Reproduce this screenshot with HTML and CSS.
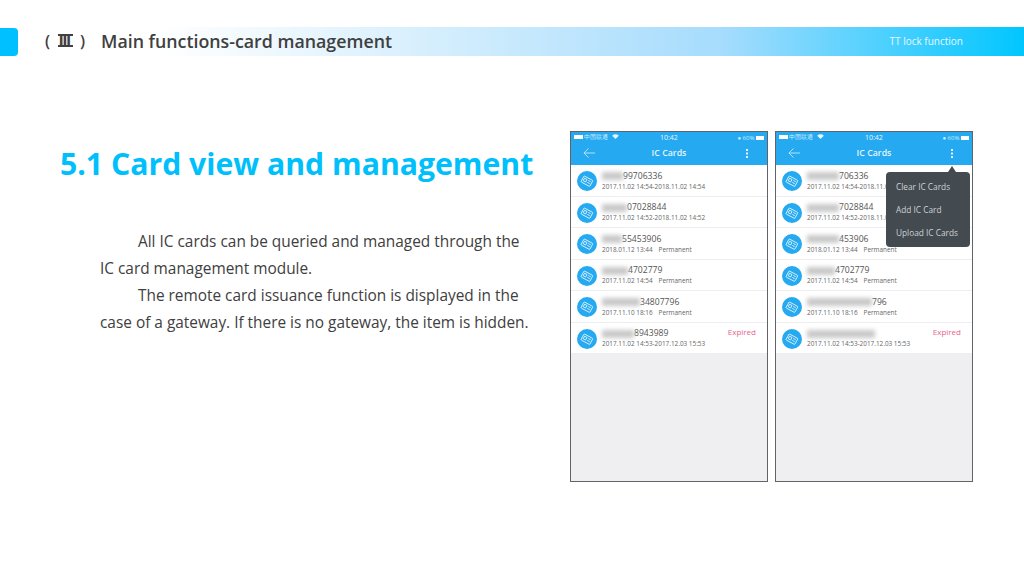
FILE: index.html
```html
<!DOCTYPE html>
<html lang="en">
<head>
  <meta charset="UTF-8" />
  <title>TT lock function</title>
  <link rel="stylesheet" href="styles.css">
</head>
<body>
  <svg class="defs" width="0" height="0">
    <symbol id="card" viewBox="0 0 22 22">
      <circle cx="11" cy="11" r="11" fill="#25a9f0"/>
      <g transform="rotate(28 11 11)" fill="none" stroke="#fff" stroke-width="0.8">
        <rect x="5.5" y="7.5" width="11" height="7.5" rx="0.8"/>
        <rect x="7.2" y="9.5" width="3" height="3.2"/>
        <path d="M12 9.8h3M12 12.2h3"/>
      </g>
    </symbol>
    <symbol id="wifi" viewBox="0 0 8 6">
      <path d="M0 2a5.6 5.6 0 0 1 8 0L4 6z" fill="#e4f5ff"/>
    </symbol>
  </svg>

  <header class="topbar">
    <div class="tab"></div>
    <div class="banner">
      <h1 class="section-name"><span class="num"><span>(</span><span class="roman">Ⅲ</span><span>)</span></span>Main functions-card management</h1>
      <span class="banner-note">TT lock function</span>
    </div>
  </header>

  <main class="content">
    <section class="copy">
      <h2>5.1 Card view and management</h2>
      <p>All IC cards can be queried and managed through the IC card management module.</p>
      <p>The remote card issuance function is displayed in the case of a gateway. If there is no gateway, the item is hidden.</p>
    </section>

    <div class="phones">
      <div class="phone">
        <div class="status">
          <span class="carrier"><i class="bars"></i>中国联通 <svg class="wifi"><use href="#wifi"/></svg></span>
          <span class="time">10:42</span>
          <span class="batt">● 60% <i class="cell"></i></span>
        </div>
        <div class="appbar">
          <svg class="back" viewBox="0 0 14 12"><path d="M13 6H1M6 1L1 6l5 5" fill="none" stroke="#bfe6fb" stroke-width="1"/></svg>
          <span>IC Cards</span>
          <i class="more"></i>
        </div>
        <ul class="cards">
          <li><svg class="ico"><use href="#card"/></svg><div><div class="no"><b class="blur" style="width:21px"></b>99706336</div><div class="meta">2017.11.02 14:54-2018.11.02 14:54</div></div></li>
          <li><svg class="ico"><use href="#card"/></svg><div><div class="no"><b class="blur" style="width:25px"></b>07028844</div><div class="meta">2017.11.02 14:52-2018.11.02 14:52</div></div></li>
          <li><svg class="ico"><use href="#card"/></svg><div><div class="no"><b class="blur" style="width:20px"></b>55453906</div><div class="meta">2018.01.12 13:44<em>Permanent</em></div></div></li>
          <li><svg class="ico"><use href="#card"/></svg><div><div class="no"><b class="blur" style="width:26px"></b>4702779</div><div class="meta">2017.11.02 14:54<em>Permanent</em></div></div></li>
          <li><svg class="ico"><use href="#card"/></svg><div><div class="no"><b class="blur" style="width:38px"></b>34807796</div><div class="meta">2017.11.10 18:16<em>Permanent</em></div></div></li>
          <li><svg class="ico"><use href="#card"/></svg><div><div class="no"><b class="blur" style="width:32px"></b>8943989</div><div class="meta">2017.11.02 14:53-2017.12.03 15:53</div></div><span class="expired">Expired</span></li>
        </ul>
      </div>

      <div class="phone">
        <div class="status">
          <span class="carrier"><i class="bars"></i>中国联通 <svg class="wifi"><use href="#wifi"/></svg></span>
          <span class="time">10:42</span>
          <span class="batt">● 60% <i class="cell"></i></span>
        </div>
        <div class="appbar">
          <svg class="back" viewBox="0 0 14 12"><path d="M13 6H1M6 1L1 6l5 5" fill="none" stroke="#bfe6fb" stroke-width="1"/></svg>
          <span>IC Cards</span>
          <i class="more"></i>
        </div>
        <ul class="cards">
          <li><svg class="ico"><use href="#card"/></svg><div><div class="no"><b class="blur" style="width:32px"></b>706336</div><div class="meta">2017.11.02 14:54-2018.11.0</div></div></li>
          <li><svg class="ico"><use href="#card"/></svg><div><div class="no"><b class="blur" style="width:32px"></b>7028844</div><div class="meta">2017.11.02 14:52-2018.11.0</div></div></li>
          <li><svg class="ico"><use href="#card"/></svg><div><div class="no"><b class="blur" style="width:32px"></b>453906</div><div class="meta">2018.01.12 13:44<em>Permanent</em></div></div></li>
          <li><svg class="ico"><use href="#card"/></svg><div><div class="no"><b class="blur" style="width:28px"></b>4702779</div><div class="meta">2017.11.02 14:54<em>Permanent</em></div></div></li>
          <li><svg class="ico"><use href="#card"/></svg><div><div class="no"><b class="blur" style="width:65px"></b>796</div><div class="meta">2017.11.10 18:16<em>Permanent</em></div></div></li>
          <li><svg class="ico"><use href="#card"/></svg><div><div class="no"><b class="blur" style="width:68px"></b></div><div class="meta">2017.11.02 14:53-2017.12.03 15:53</div></div><span class="expired">Expired</span></li>
        </ul>
        <div class="menu">
          <span>Clear IC Cards</span>
          <span>Add IC Card</span>
          <span>Upload IC Cards</span>
        </div>
      </div>
    </div>
  </main>
</body>
</html>
```

FILE: styles.css
```css
* {
  margin: 0;
  padding: 0;
  box-sizing: border-box;
}

body {
  width: 1024px;
  height: 576px;
  overflow: hidden;
  background: #fff;
  font-family: "Open Sans", sans-serif;
  color: #404040;
}

.defs {
  display: block;
}

.topbar {
  display: flex;
  margin-top: 27px;
  height: 29px;
}

.tab {
  width: 18px;
  height: 28px;
  margin-top: 1px;
  background: #00c0ff;
  border-radius: 0 4px 4px 0;
}

.banner {
  flex: 1;
  display: flex;
  align-items: center;
  justify-content: space-between;
  padding: 0 61px 2px 27px;
  background: linear-gradient(90deg, #fff 14%, #e4f4fd 32%, #a6dcfd 70%, #00c6fe 100%);
}

.section-name {
  display: flex;
  align-items: center;
  font-size: 17.8px;
  font-weight: 600;
  color: #404040;
  white-space: nowrap;
}

.num {
  display: flex;
  justify-content: space-between;
  align-items: center;
  width: 40px;
  margin-right: 16px;
  font-size: 16px;
}

.roman {
  display: block;
  width: 15px;
  height: 13px;
  border-top: 2px solid #404040;
  border-bottom: 2px solid #404040;
  font-family: "DejaVu Sans", sans-serif;
  font-size: 13px;
  font-weight: 700;
  line-height: 9px;
  letter-spacing: 0;
  text-align: center;
  overflow: hidden;
}

.banner-note {
  font-size: 10px;
  color: #e8f8ff;
}

.content {
  display: flex;
  height: 425px;
  padding: 75px 51px 0 60px;
  justify-content: space-between;
}

.copy {
  width: 474px;
}

.copy h2 {
  font-size: 30.2px;
  font-weight: 700;
  line-height: 40px;
  color: #00c0fb;
  white-space: nowrap;
  margin: 13px 0 44px;
}

.copy p {
  margin-left: 40px;
  width: 432px;
  font-size: 15.4px;
  line-height: 27px;
  text-indent: 38px;
}

.phones {
  display: flex;
  gap: 7px;
}

.phone {
  position: relative;
  width: 198px;
  height: 351px;
  background: #efeff1;
  border: 1px solid #5e6468;
}

.status {
  display: flex;
  justify-content: space-between;
  align-items: center;
  height: 11px;
  padding: 0 3px;
  background: #25a9f0;
  font-size: 6px;
  color: #cfeeff;
  position: relative;
}

.time {
  position: absolute;
  left: 89px;
  font-size: 7px;
  color: #e6f6ff;
}

.bars {
  display: inline-block;
  width: 9px;
  height: 4px;
  margin-right: 1px;
  background: #fff;
}

.wifi {
  width: 7px;
  height: 5px;
  margin-left: 2px;
}

.cell {
  display: inline-block;
  width: 8px;
  height: 4px;
  background: #fff;
}

.appbar {
  position: relative;
  display: flex;
  align-items: center;
  justify-content: center;
  height: 22px;
  padding-bottom: 3px;
  background: #25a9f0;
  color: #e4f5ff;
  font-size: 8.8px;
  font-weight: 600;
}

.back {
  position: absolute;
  left: 12px;
  top: 4px;
  width: 13px;
  height: 12px;
}

.more {
  position: absolute;
  right: 19px;
  top: 6px;
  width: 2px;
  height: 2px;
  background: #e4f5ff;
  box-shadow: 0 3.5px #e4f5ff, 0 7px #e4f5ff;
}

.cards {
  list-style: none;
  background: #fff;
}

.cards li {
  display: flex;
  align-items: center;
  height: 31.5px;
  padding: 0 11px 0 6px;
  border-bottom: 1px solid #eeeef0;
  gap: 5px;
}

.ico {
  flex: none;
  width: 20px;
  height: 20px;
  margin-top: 2px;
}

.no {
  display: flex;
  align-items: center;
  height: 13px;
  padding-top: 2px;
  font-size: 8.6px;
  line-height: 11px;
  color: #555;
}

.blur {
  display: block;
  height: 8px;
  background: #c9c9c9;
  filter: blur(2px);
}

.meta {
  font-size: 6.4px;
  line-height: 10px;
  color: #666;
  white-space: nowrap;
}

.meta em {
  font-style: normal;
  margin-left: 6px;
}

.expired {
  margin-left: auto;
  margin-bottom: 12px;
  font-size: 8px;
  color: #e8648c;
}

.menu {
  position: absolute;
  left: 110px;
  top: 40px;
  width: 84px;
  height: 75px;
  display: flex;
  flex-direction: column;
  justify-content: space-around;
  padding: 3px 10px;
  background: #434a50;
  border-radius: 4px;
  font-size: 8.3px;
  color: #cfd3d6;
}

.menu::before {
  content: "";
  position: absolute;
  top: -6px;
  right: 14px;
  border: 4px solid transparent;
  border-top: 0;
  border-bottom: 6px solid #434a50;
}
```
